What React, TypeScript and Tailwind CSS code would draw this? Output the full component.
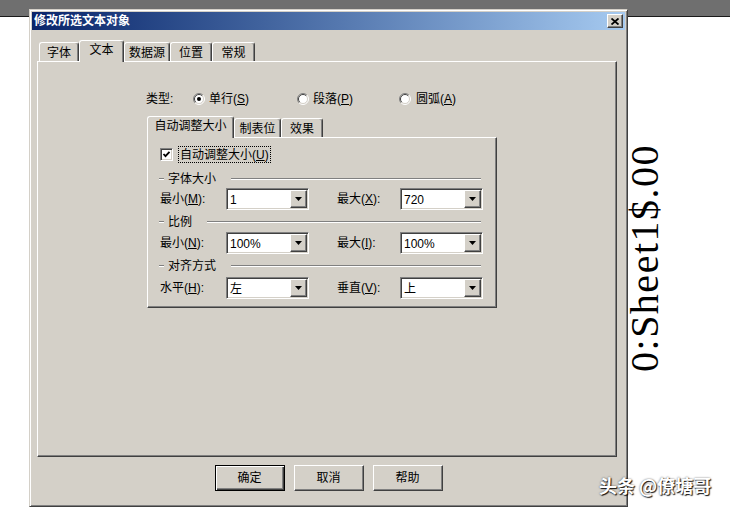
import type { ReactNode } from 'react';

const raised =
  'border border-t-white border-l-white border-r-[#404040] border-b-[#404040] shadow-[inset_-1px_-1px_#808080]';
const sunken =
  'border border-t-[#808080] border-l-[#808080] border-r-white border-b-white shadow-[inset_1px_1px_#404040,inset_-1px_-1px_#d4d0c8]';

function Tab({ label, className, active }: { label: string; className: string; active?: boolean }) {
  if (active) {
    return (
      <div
        className={`relative z-10 -mb-px h-[22px] flex justify-center pt-[2px] bg-[#d4d0c8] rounded-t-[3px] border-t border-l border-r border-t-white border-l-white border-r-[#404040] shadow-[inset_-1px_0_#808080] ${className}`}
      >
        {label}
      </div>
    );
  }
  return (
    <div
      className={`h-[19px] flex justify-center pt-[3px] rounded-t-[3px] border-t border-l border-r border-t-white border-l-white border-r-[#404040] shadow-[inset_-1px_0_#808080] ${className}`}
    >
      {label}
    </div>
  );
}

function Radio({ checked }: { checked?: boolean }) {
  return (
    <svg width="12" height="12" viewBox="0 0 12 12" className="shrink-0">
      <circle cx="6" cy="6" r="5" fill="white" />
      <path d="M2.1 9.9 A5.5 5.5 0 0 1 9.9 2.1" fill="none" stroke="#808080" />
      <path d="M9.9 2.1 A5.5 5.5 0 0 1 2.1 9.9" fill="none" stroke="#ffffff" />
      <path d="M2.8 9.2 A4.5 4.5 0 0 1 9.2 2.8" fill="none" stroke="#404040" />
      <path d="M9.2 2.8 A4.5 4.5 0 0 1 2.8 9.2" fill="none" stroke="#d4d0c8" />
      {checked && <circle cx="6" cy="6" r="2" fill="black" />}
    </svg>
  );
}

function Combo({ value }: { value: string }) {
  return (
    <div className={`w-[83px] h-[22px] bg-white flex items-center ${sunken}`}>
      <span className="flex-1 pl-[3px] pt-px">{value}</span>
      <div className={`w-[17px] h-[18px] mr-px bg-[#d4d0c8] flex items-center justify-center ${raised}`}>
        <svg width="7" height="4" viewBox="0 0 7 4">
          <polygon points="0,0 7,0 3.5,4" fill="black" />
        </svg>
      </div>
    </div>
  );
}

function Etched({ className }: { className: string }) {
  return <div className={`h-[2px] border-t border-t-[#808080] border-b border-b-white ${className}`} />;
}

function Header({ label }: { label: string }) {
  return (
    <div className="flex items-center h-[14px] pl-[11px]">
      <Etched className="w-[5px]" />
      <span className="ml-[4px]">{label}</span>
      <Etched className="flex-1 ml-[15px] mr-[15px]" />
    </div>
  );
}

function Row({ l1, v1, l2, v2 }: { l1: ReactNode; v1: string; l2: ReactNode; v2: string }) {
  return (
    <div className="flex items-center pl-[12px]">
      <span className="w-[66px]">{l1}</span>
      <Combo value={v1} />
      <span className="w-[28px]" />
      <span className="w-[63px]">{l2}</span>
      <Combo value={v2} />
    </div>
  );
}

function Button({ label, primary }: { label: string; primary?: boolean }) {
  const cls = primary
    ? 'border border-black shadow-[inset_1px_1px_white,inset_-1px_-1px_#404040,inset_-2px_-2px_#808080]'
    : raised;
  return (
    <div className={`w-[70px] h-[26px] flex items-center justify-center bg-[#d4d0c8] ${cls}`}>{label}</div>
  );
}

export default function App() {
  return (
    <div className="relative w-[730px] h-[512px] bg-white overflow-hidden text-[12px] leading-[14px] text-black font-['Liberation_Sans','Noto_Sans_CJK_SC',sans-serif]">
      <div className="h-[17px] bg-[#6f6f6f] border-b border-b-[#1a1a1a]" />
      <div className="flex -mt-[8px]">
        <div className="ml-[29px] w-[599px] h-[498px] shrink-0 bg-[#d4d0c8] p-[2px] flex flex-col border border-t-[#d4d0c8] border-l-[#d4d0c8] border-r-[#404040] border-b-[#404040] shadow-[inset_1px_1px_white,inset_-1px_-1px_#808080]">
          <div className="h-[18px] flex items-center justify-between pl-[2px] pr-[2px] bg-gradient-to-r from-[#0a246a] to-[#a6caf0]">
            <span className="text-white font-bold">修改所选文本对象</span>
            <div className={`w-[16px] h-[14px] bg-[#d4d0c8] flex items-center justify-center ${raised}`}>
              <svg width="8" height="7" viewBox="0 0 8 7">
                <path d="M0.5 0.5 L7.5 6.5 M7.5 0.5 L0.5 6.5" stroke="black" strokeWidth="1.8" />
              </svg>
            </div>
          </div>

          <div className="mt-[10px] ml-[5px] w-[580px]">
            <div className="flex items-end pl-[2px] h-[21px]">
              <Tab label="字体" className="w-[40px]" />
              <Tab label="文本" className="w-[45px]" active />
              <Tab label="数据源" className="w-[46px]" />
              <Tab label="位置" className="w-[42px]" />
              <Tab label="常规" className="w-[43px]" />
            </div>
            <div className={`h-[396px] pl-[108px] pt-[30px] ${raised}`}>
              <div className="flex items-center h-[14px]">
                <span className="w-[47px]">类型:</span>
                <div className="w-[104px] flex items-center gap-[4px]">
                  <Radio checked />
                  <span>
                    单行(<u>S</u>)
                  </span>
                </div>
                <div className="w-[102px] flex items-center gap-[4px]">
                  <Radio />
                  <span>
                    段落(<u>P</u>)
                  </span>
                </div>
                <div className="flex items-center gap-[5px]">
                  <Radio />
                  <span>
                    圆弧(<u>A</u>)
                  </span>
                </div>
              </div>

              <div className="mt-[10px] ml-px w-[350px]">
                <div className="flex items-end h-[21px]">
                  <Tab label="自动调整大小" className="w-[87px]" active />
                  <Tab label="制表位" className="w-[47px]" />
                  <Tab label="效果" className="w-[42px]" />
                </div>
                <div className={`h-[171px] pt-[8px] flex flex-col ${raised}`}>
                  <div className="flex items-center h-[17px] pl-[12px]">
                    <div className={`w-[13px] h-[13px] bg-white flex items-center justify-center ${sunken}`}>
                      <svg width="9" height="9" viewBox="0 0 9 9">
                        <polyline points="1.5,4 3.5,6.2 7.5,1.8" fill="none" stroke="black" strokeWidth="1.8" />
                      </svg>
                    </div>
                    <span className="ml-[5px] h-[17px] px-px flex items-center border border-dotted border-black">
                      自动调整大小(<u>U</u>)
                    </span>
                  </div>
                  <div className="mt-[9px]">
                    <Header label="字体大小" />
                  </div>
                  <div className="mt-[2px]">
                    <Row
                      l1={<>最小(<u>M</u>):</>}
                      v1="1"
                      l2={<>最大(<u>X</u>):</>}
                      v2="720"
                    />
                  </div>
                  <div className="mt-[5px]">
                    <Header label="比例" />
                  </div>
                  <div className="mt-[3px]">
                    <Row
                      l1={<>最小(<u>N</u>):</>}
                      v1="100%"
                      l2={<>最大(<u>I</u>):</>}
                      v2="100%"
                    />
                  </div>
                  <div className="mt-[5px]">
                    <Header label="对齐方式" />
                  </div>
                  <div className="mt-[4px]">
                    <Row
                      l1={<>水平(<u>H</u>):</>}
                      v1="左"
                      l2={<>垂直(<u>V</u>):</>}
                      v2="上"
                    />
                  </div>
                </div>
              </div>
            </div>
          </div>

          <div className="mt-[8px] flex justify-center gap-[9px]">
            <Button label="确定" primary />
            <Button label="取消" />
            <Button label="帮助" />
          </div>
        </div>

        <div className="flex-1 flex items-center">
          <div className="-ml-[3px] [writing-mode:vertical-rl] rotate-180 font-['Liberation_Serif',serif] text-[40px] leading-[40px] tracking-[1.5px]">
            0:Sheet1$.00
          </div>
        </div>
      </div>

      <div className="absolute left-[599px] top-[475px] text-[18px] leading-[20px] font-bold text-white font-['Noto_Sans_CJK_SC',sans-serif] [text-shadow:1px_1px_1px_rgba(0,0,0,0.9),0_0_2px_rgba(0,0,0,0.6)]">
        头条 @僚塘哥
      </div>
    </div>
  );
}
